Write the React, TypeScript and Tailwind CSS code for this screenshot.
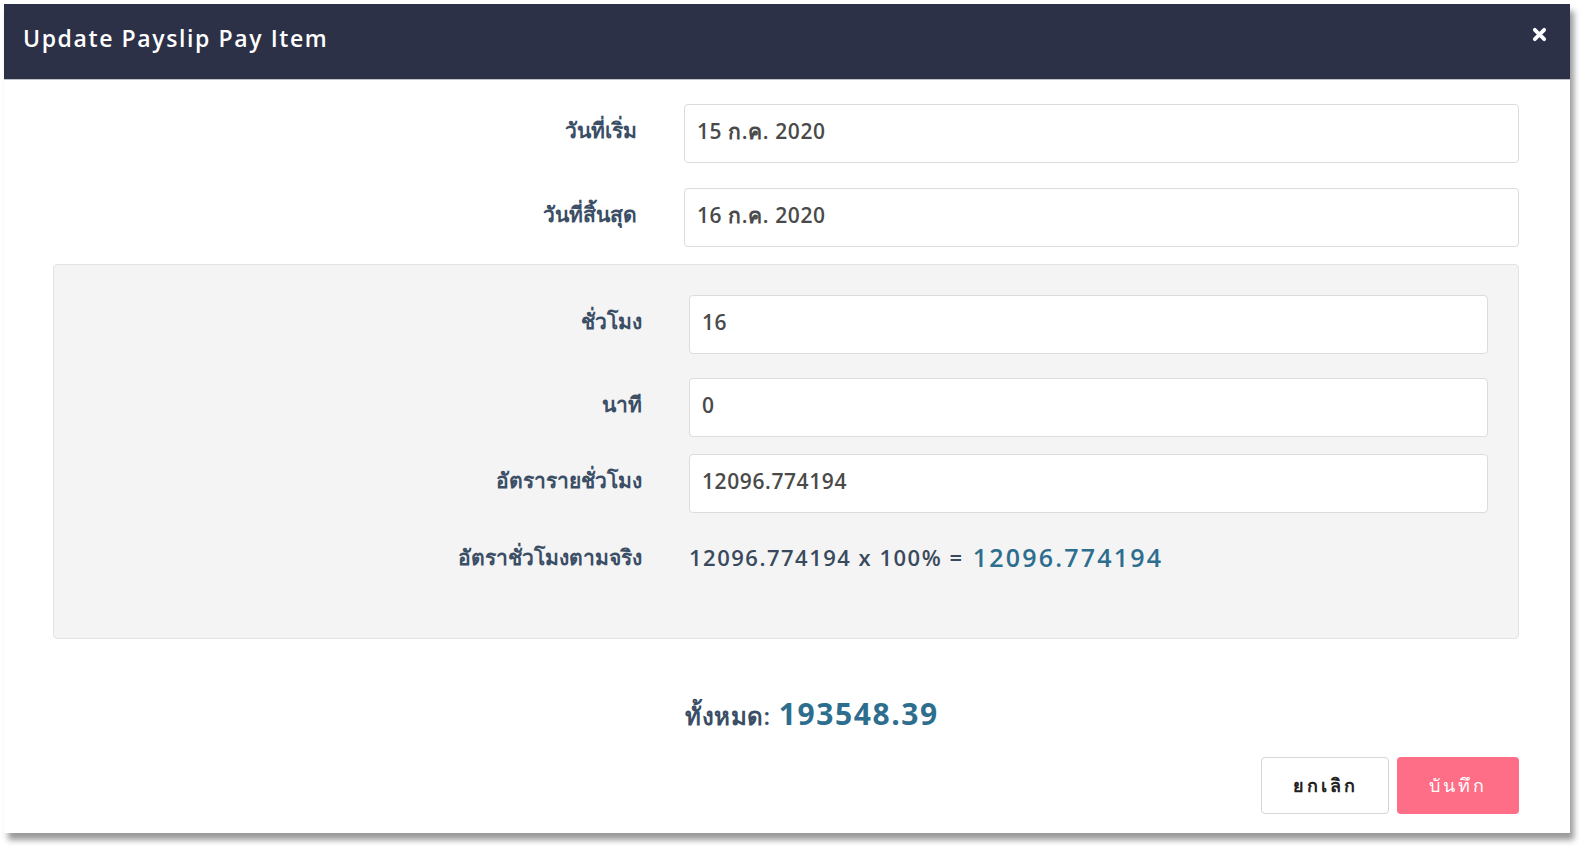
const font = { fontFamily: '"Open Sans", "Noto Sans", Lato, sans-serif' }

function Field({ label, value, labelW, inputW }: { label: string; value: string; labelW: string; inputW: string }) {
  return (
    <div className="flex items-start">
      <label className={`${labelW} shrink-0 text-right pt-[11px] pr-[47px] text-[21px] font-bold text-[#3a4e66]`}>{label}</label>
      <div className={`${inputW} h-[59px] flex items-center px-[12px] pb-[4px] bg-white border border-[#dcdcdc] rounded-[4px] text-[21px] font-semibold tracking-[0.6px] text-[#4a4a4a]`}>
        {value}
      </div>
    </div>
  )
}

export default function App() {
  return (
    <div className="min-h-screen bg-white pt-[4px] pl-[4px]" style={font}>
      <div className="w-[1566px] h-[829px] bg-white flex flex-col shadow-[4px_7px_6px_rgba(0,0,0,0.4)]">
        <div className="h-[76px] shrink-0 bg-[#2c3148] border-b border-[#bfc1c6] flex items-center justify-between pl-[19px] pr-[23px]">
          <h1 className="mb-[6px] text-[23px] font-semibold tracking-[1.6px] text-white">Update Payslip Pay Item</h1>
          <svg width="15" height="15" viewBox="0 0 16 16" className="mb-[14px] text-white">
            <path d="M3 3 L13 13 M13 3 L3 13" stroke="currentColor" strokeWidth="4" strokeLinecap="round" />
          </svg>
        </div>

        <div className="flex flex-col pl-[49px] pr-[51px] pt-[24px]">
          <div className="flex flex-col gap-[25px]">
            <Field label="วันที่เริ่ม" value="15 ก.ค. 2020" labelW="w-[631px]" inputW="w-[835px]" />
            <Field label="วันที่สิ้นสุด" value="16 ก.ค. 2020" labelW="w-[631px]" inputW="w-[835px]" />
          </div>

          <div className="mt-[17px] h-[375px] bg-[#f4f4f4] border border-[#e3e3e3] rounded-[4px] pt-[30px] pr-[30px] flex flex-col">
            <Field label="ชั่วโมง" value="16" labelW="w-[635px]" inputW="w-[799px]" />
            <div className="mt-[24px]">
              <Field label="นาที" value="0" labelW="w-[635px]" inputW="w-[799px]" />
            </div>
            <div className="mt-[17px]">
              <Field label="อัตรารายชั่วโมง" value="12096.774194" labelW="w-[635px]" inputW="w-[799px]" />
            </div>
            <div className="mt-[26px] flex items-center">
              <span className="w-[635px] shrink-0 text-right pr-[47px] text-[21px] font-bold text-[#3a4e66]">อัตราชั่วโมงตามจริง</span>
              <span className="text-[22px] font-semibold tracking-[1.5px] text-[#3a4a5e] whitespace-pre">12096.774194 x 100% = </span>
              <span className="ml-[2px] text-[25px] font-semibold tracking-[2.2px] text-[#2d6e8e]">12096.774194</span>
            </div>
          </div>

          <div className="mt-[52px] flex justify-center items-baseline pl-[52px]">
            <span className="text-[24px] font-semibold tracking-[0.5px] text-[#3a4e66]">ทั้งหมด:</span>
            <span className="ml-[8px] text-[30px] font-bold tracking-[1.6px] text-[#2d6e8e]">193548.39</span>
          </div>

          <div className="mt-[21px] flex justify-end gap-[8px]">
            <button className="w-[128px] h-[57px] bg-white border border-[#d6d6d6] rounded-[4px] text-[18px] font-semibold tracking-[3px] text-[#222]">ยกเลิก</button>
            <button className="w-[122px] h-[57px] bg-[#fe6e87] rounded-[4px] text-[18px] font-medium tracking-[3px] text-white">บันทึก</button>
          </div>
        </div>
      </div>
    </div>
  )
}
